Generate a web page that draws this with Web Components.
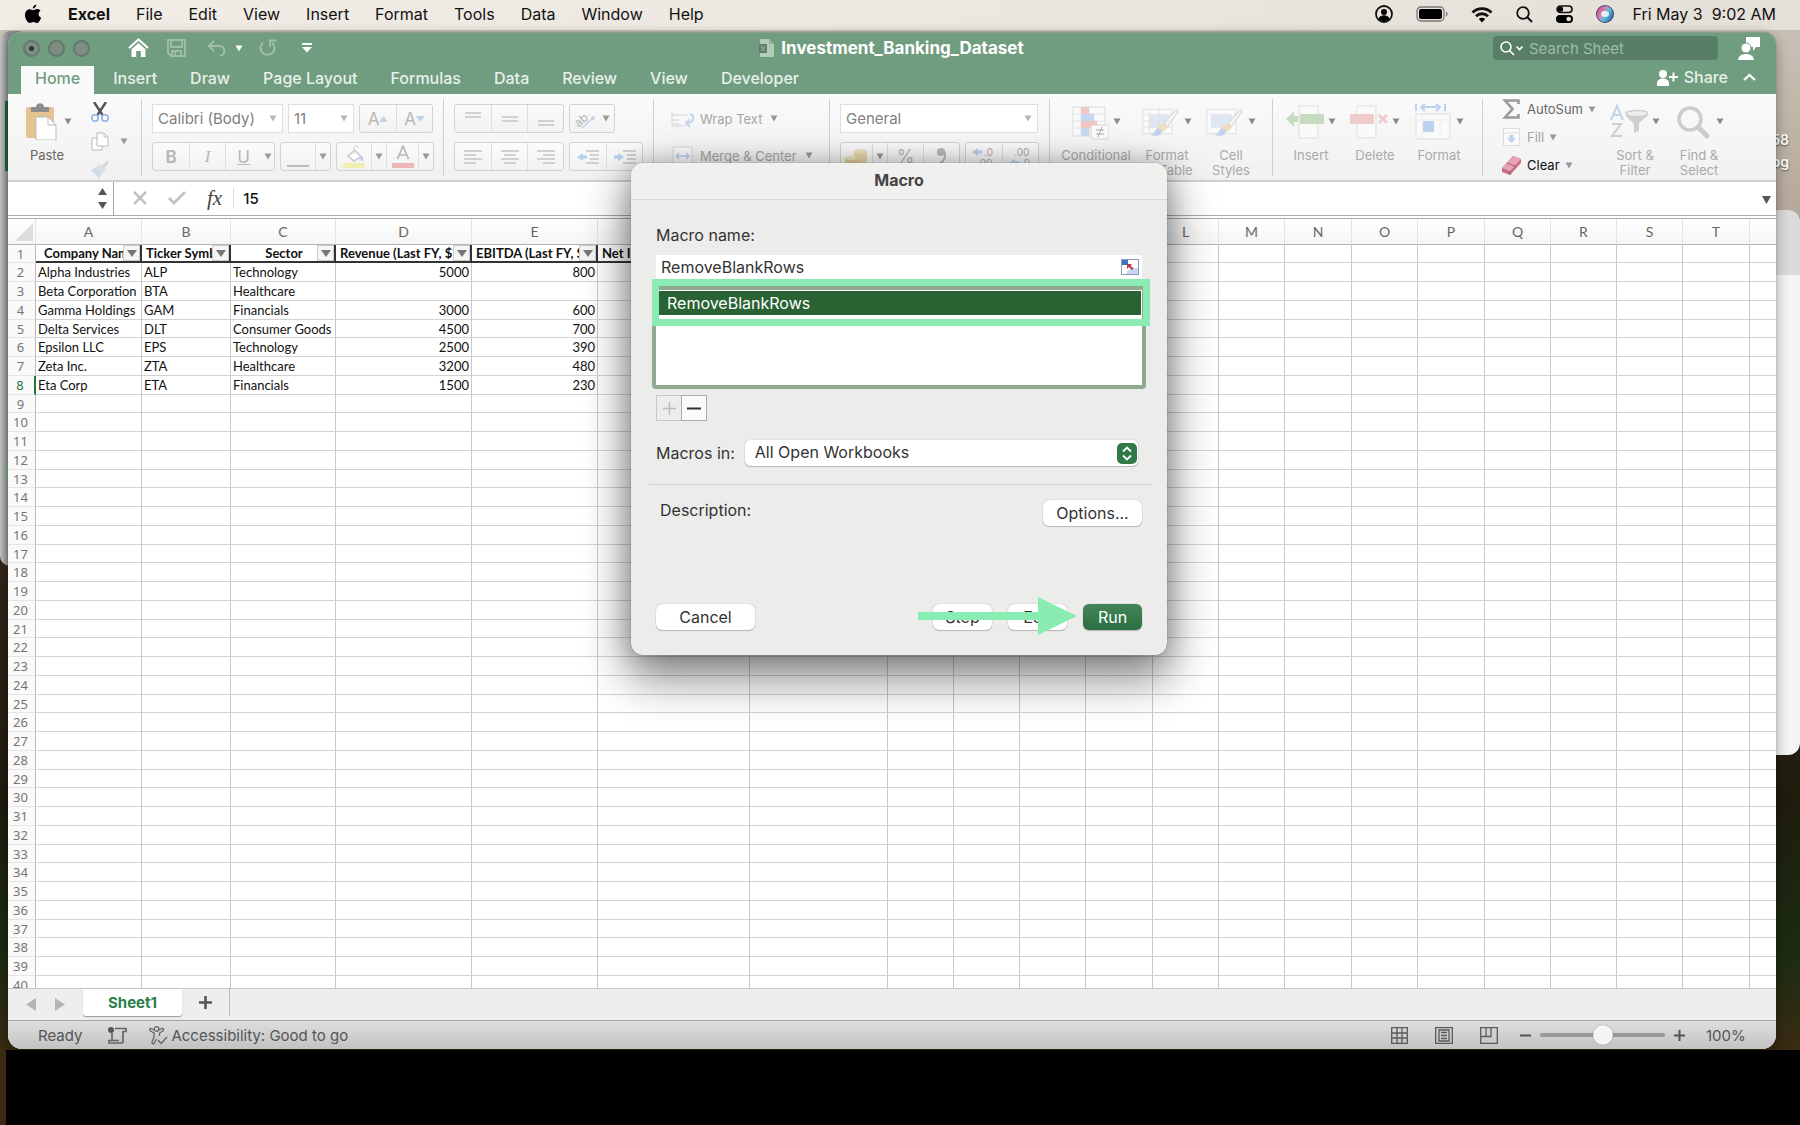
<!DOCTYPE html>
<html lang="en">
<head>
<meta charset="utf-8">
<title>Investment_Banking_Dataset</title>
<style>
  html, body {
    margin: 0;
    height: 100%;
    overflow: hidden;
    background: #000;
    font-family: Inter, "Liberation Sans", sans-serif;
  }
</style>
</head>
<body>
<mac-desktop>
  <menu-bar slot="menu"></menu-bar>
  <excel-window>
    <title-bar></title-bar>
    <ribbon-tabs></ribbon-tabs>
    <excel-ribbon></excel-ribbon>
    <formula-bar></formula-bar>
    <sheet-grid></sheet-grid>
    <sheet-tabs></sheet-tabs>
    <status-bar></status-bar>
  </excel-window>
  <macro-dialog slot="dialog"></macro-dialog>
</mac-desktop>

<script>
const caret = '<svg class="caret" width="8" height="7" viewBox="0 0 8 7"><path d="M0.5 0.5h7L4 6.5z" fill="currentColor"/></svg>';

const reset = `
  :host, * { box-sizing: border-box; }
  button, input, select {
    font: inherit;
    color: inherit;
    margin: 0;
    padding: 0;
    border: 0;
    background: none;
    border-radius: 0;
    outline: 0;
  }
  select { appearance: none; }
  svg { display: block; flex: none; }
`;

class MacDesktop extends HTMLElement {
  constructor() {
    super();
    this.attachShadow({mode: 'open'}).innerHTML = `
      <style>
        :host {
          display: flex;
          flex-direction: column;
          height: 100vh;
          position: relative;
          overflow: hidden;
          background: linear-gradient(#cdc4b9, #b5a99c 210px, #34251a 560px, #1f1c0e 800px, #1b2c12 950px, #3a2b12 1049px);
        }
        .behind { position: absolute; }
        .left {
          left: 0; top: 31px; width: 20px; height: 535px;
          background: linear-gradient(90deg, #c8c8c8, #8f8f8f 8px);
          border-radius: 10px 0 0 10px;
        }
        .mark { left: 5px; top: 101px; width: 4px; height: 70px; background: #1f6238; }
        .mark.low { top: 462px; height: 17px; background: #7fa98a; }
        .right {
          right: 0; top: 210px; width: 60px; height: 545px;
          border-radius: 0 12px 12px 0;
          background: linear-gradient(#dcdbda 65px, #f4f4f4 65px);
        }
        .floor { left: 6px; right: 0; top: 1050px; bottom: 0; background: #000; }
        .file {
          right: 11px; top: 129px;
          font-size: 14px;
          font-weight: 600;
          line-height: 22px;
          text-align: right;
          color: #fff;
          text-shadow: 0 1px 2px #0009;
        }
        .windows { flex: 1; min-height: 0; display: flex; margin: 2px 24px 76px 8px; position: relative; }
        ::slotted(excel-window) { flex: 1; min-width: 0; }
      </style>
      <div class="behind left"></div>
      <div class="behind mark"></div>
      <div class="behind mark low"></div>
      <div class="behind right"></div>
      <div class="behind floor"></div>
      <div class="behind file">58<br>pg</div>
      <slot name="menu"></slot>
      <div class="windows"><slot></slot></div>
      <slot name="dialog"></slot>
    `;
  }
}
customElements.define('mac-desktop', MacDesktop);

class MenuBar extends HTMLElement {
  constructor() {
    super();
    const menus = ['File', 'Edit', 'View', 'Insert', 'Format', 'Tools', 'Data', 'Window', 'Help'];
    this.attachShadow({mode: 'open'}).innerHTML = `
      <style>
        ${reset}
        :host {
          display: flex;
          align-items: center;
          justify-content: space-between;
          height: 30px;
          padding: 0 24px 2px;
          font-size: 16px;
          color: #111;
          background: linear-gradient(90deg, #f1ede6, #ece7e0 50%, #e4dfd7);
          position: relative;
        }
        nav, .extras { display: flex; align-items: center; }
        nav { gap: 26px; }
        nav button:first-of-type { font-weight: 700; }
        .extras { gap: 23px; }
        .clock { white-space: pre; margin-left: -5px; }
      </style>
      <nav>
        <svg width="18" height="20" viewBox="0 0 18 20"><path d="M12.3 0.5c.1 2-1.7 4-3.5 4C8.500 2.700 10.300 .8 12.300 .5zM16.500 6.800c-2.900 1.800-2.400 5.700.6 6.900-.8 2.300-2.400 5.300-4.200 5.300-1.400 0-1.900-.9-3.500-.9s-2.100.9-3.500.9C3.700 19 1 14.800 1 11.100 1 7.300 3.400 5.200 5.700 5.200c1.500 0 2.600 1 3.600 1 .9 0 2.300-1.100 4-1.100 1.300 0 2.500.6 3.200 1.700z"/></svg>
        <button>Excel</button>
        ${menus.map(m => `<button>${m}</button>`).join('')}
      </nav>
      <div class="extras">
        <svg width="18" height="18" viewBox="0 0 18 18"><circle cx="9" cy="9" r="8" fill="none" stroke="#111" stroke-width="1.800"/><circle cx="9" cy="7" r="3"/><path d="M3.500 14c1-5 10-5 11 0-3 3.300-8 3.300-11 0z"/></svg>
        <svg width="32" height="16" viewBox="0 0 32 16"><rect x="1" y="1" width="27" height="14" rx="4" fill="none" stroke="#777" stroke-width="1.300"/><rect x="3" y="3" width="23" height="10" rx="2"/><path d="M30 5.500v5c2-.8 2-4.200 0-5z" fill="#777"/></svg>
        <svg width="22" height="17" viewBox="0 0 22 17"><g fill="none" stroke="#111" stroke-width="2.800"><path d="M1.500 6.500c5.300-5.300 13.700-5.300 19 0"/><path d="M5 10.300c3.300-3.400 8.700-3.400 12 0"/></g><path d="M11 16.500l-3.200-3.400c1.800-1.700 4.600-1.700 6.400 0z"/></svg>
        <svg width="17" height="17" viewBox="0 0 17 17"><circle cx="7" cy="7" r="5.800" fill="none" stroke="#111" stroke-width="1.800"/><path d="M11.300 11.300l4.700 4.700" stroke="#111" stroke-width="2"/></svg>
        <svg width="17" height="18" viewBox="0 0 17 18"><rect x="1" y="1" width="15" height="6.500" rx="3.250" fill="none" stroke="#111" stroke-width="1.600"/><circle cx="4.500" cy="4.200" r="2.600"/><rect y="10" width="17" height="8" rx="4"/><circle cx="12.700" cy="14" r="2.300" fill="#e8e3dc"/></svg>
        <svg width="18" height="18" viewBox="0 0 18 18"><defs><linearGradient id="siri" x1="0" x2="1" y1="0.200" y2="0.800"><stop stop-color="#d9467c"/><stop offset=".4" stop-color="#c98fc4"/><stop offset=".6" stop-color="#48c3d0"/><stop offset="1" stop-color="#3d55b8"/></linearGradient></defs><circle cx="9" cy="9" r="9" fill="#45436b"/><circle cx="9" cy="9" r="8" fill="url(#siri)"/><ellipse cx="9" cy="9" rx="4" ry="3" fill="#fff" opacity=".8"/></svg>
        <span class="clock">Fri May 3  9:02 AM</span>
      </div>
    `;
  }
}
customElements.define('menu-bar', MenuBar);

class ExcelWindow extends HTMLElement {
  constructor() {
    super();
    this.attachShadow({mode: 'open'}).innerHTML = `
      <style>
        :host {
          display: flex;
          flex-direction: column;
          overflow: hidden;
          background: #fff;
          border-radius: 12px 12px 14px 14px;
          box-shadow: 0 0 1px #0008, 0 4px 14px #0005;
        }
        ::slotted(*) { flex: none; }
        ::slotted(sheet-grid) { flex: 1; min-height: 0; }
      </style>
      <slot></slot>
    `;
  }
}
customElements.define('excel-window', ExcelWindow);

class TitleBar extends HTMLElement {
  constructor() {
    super();
    this.attachShadow({mode: 'open'}).innerHTML = `
      <style>
        ${reset}
        :host {
          display: grid;
          grid-template-columns: 1fr auto 1fr;
          align-items: center;
          height: 34px;
          padding: 0 16px 3px 15px;
          background: #709d80;
          border-top: 1px solid #8a9c8e;
          color: #fff;
        }
        .tools, .title, .side, .lights { display: flex; align-items: center; }
        .lights { gap: 8px; margin-right: 38px; }
        .light { width: 17px; height: 17px; border-radius: 50%; background: #7d8f83; border: 2px solid #64786b; display: grid; place-items: center; }
        .light.edited::after { content: ""; width: 5px; height: 5px; border-radius: 50%; background: #333; }
        .home { margin-right: 18px; }
        .save { margin-right: 21px; }
        .undo { margin-right: 8px; }
        .redo { margin: 0 24px 0 15px; }
        .title { gap: 7px; font-weight: 700; font-size: 17px; }
        .side { justify-content: flex-end; gap: 20px; }
        .search {
          display: flex;
          align-items: center;
          gap: 6px;
          width: 225px;
          height: 24px;
          padding: 0 7px;
          border-radius: 4px;
          background: #597e67;
        }
        .search input { flex: 1; min-width: 0; font-size: 15px; }
        .search input::placeholder { color: #9dbda8; opacity: 1; }
      </style>
      <div class="tools">
        <div class="lights"><button class="light edited" aria-label="Close"></button><button class="light" aria-label="Minimize"></button><button class="light" aria-label="Zoom"></button></div>
        <button class="home" aria-label="Home"><svg width="21" height="20" viewBox="0 0 21 20"><path d="M1 10l9.500-8.500L20 10" fill="none" stroke="#fff" stroke-width="2.200"/><path d="M3.500 11.200l7-6.200 7 6.200V19h-4.700v-6H8.200v6H3.500z" fill="#fff"/></svg></button>
        <button class="save" aria-label="Save"><svg width="19" height="18" viewBox="0 0 19 18"><path d="M1 1h17v16H4l-3-3z M4 1v7h11V1 M5 17v-5h9v5 M8 12v5" fill="none" stroke="#9fbfaa" stroke-width="1.800"/></svg></button>
        <button class="undo" aria-label="Undo"><svg width="20" height="17" viewBox="0 0 20 17"><path d="M7 1L2 6l5 5M2 6h10c7 0 7 9.500 1 9.500" fill="none" stroke="#9fbfaa" stroke-width="2"/></svg></button>
        ${caret}
        <button class="redo" aria-label="Repeat"><svg width="20" height="18" viewBox="0 0 20 18"><path d="M5 3.500a7 7 0 1 0 9 0M12 8V1.500h7" fill="none" stroke="#9fbfaa" stroke-width="2"/></svg></button>
        <button aria-label="Customize toolbar"><svg width="10" height="10" viewBox="0 0 10 10"><path d="M0 0h10v2H0zM0 4h10L5 9.500z" fill="#fff"/></svg></button>
      </div>
      <div class="title">
        <svg width="15" height="18" viewBox="0 0 15 18"><path d="M1 0h9l5 5v13H1z" fill="#b3cbbb"/><path d="M10 0l5 5h-5z" fill="#8fb09b"/><rect y="5" width="8" height="9" fill="#5f7d69"/><path d="M2 7l4 5M6 7l-4 5" stroke="#9db9a7"/></svg>
        <span>Investment_Banking_Dataset</span>
      </div>
      <div class="side">
        <label class="search">
          <svg width="23" height="15" viewBox="0 0 23 15"><circle cx="6" cy="6" r="5" fill="none" stroke="#fff" stroke-width="1.600"/><path d="M9.700 9.700l4.300 4.300M16.500 5.500l3 3 3-3" fill="none" stroke="#fff" stroke-width="1.600"/></svg>
          <input type="text" placeholder="Search Sheet" aria-label="Search Sheet">
        </label>
        <button aria-label="Comments"><svg width="22" height="24" viewBox="0 0 22 24"><path d="M8 1h14v10h-4l-3 4v-4H8z" fill="#fff"/><circle cx="8" cy="12" r="5" fill="#fff" stroke="#709d80"/><path d="M0 24c0-8 16-8 16 0z" fill="#fff"/></svg></button>
      </div>
    `;
  }
}
customElements.define('title-bar', TitleBar);

class RibbonTabs extends HTMLElement {
  constructor() {
    super();
    const tabs = ['Home', 'Insert', 'Draw', 'Page Layout', 'Formulas', 'Data', 'Review', 'View', 'Developer'];
    this.attachShadow({mode: 'open'}).innerHTML = `
      <style>
        ${reset}
        :host {
          display: flex;
          justify-content: space-between;
          height: 28px;
          padding: 0 20px 0 13px;
          background: #709d80;
          color: #e8f0ea;
          font-size: 16px;
          font-weight: 500;
        }
        .tabs { display: flex; gap: 5px; }
        .tabs button { padding: 0 14px 4px; }
        .tabs button[aria-selected=true] { background: #fafafa; color: #709d80; }
        .share, .end { display: flex; align-items: center; }
        .share { gap: 6px; }
        .end { gap: 15px; padding-bottom: 6px; }
      </style>
      <div class="tabs" role="tablist">
        ${tabs.map((t, i) => `<button role="tab" aria-selected="${i === 0}">${t}</button>`).join('')}
      </div>
      <div class="end">
        <button class="share">
          <svg width="21" height="17" viewBox="0 0 21 17"><circle cx="6" cy="5" r="4" fill="#fff"/><path d="M0 17v-3c0-6 12-6 12 0v3zM15.500 3.500h2v3.500h3.500v2h-3.500v3.500h-2V9H12V7h3.500z" fill="#fff"/></svg>
          Share
        </button>
        <button aria-label="Collapse ribbon"><svg width="13" height="8" viewBox="0 0 13 8"><path d="M1 7l5.500-5L12 7" fill="none" stroke="#fff" stroke-width="2.200"/></svg></button>
      </div>
    `;
  }
}
customElements.define('ribbon-tabs', RibbonTabs);

// Large ribbon button: a 38px icon with its caret, and up to two label lines.
class RibbonButton extends HTMLElement {
  constructor() {
    super();
    this.attachShadow({mode: 'open'}).innerHTML = `
      <style>
        ${reset}
        :host { display: block; width: 64px; color: #aaa; }
        :host([wide]) { width: 78px; }
        button { width: 100%; font-size: 13px; line-height: 15px; }
        .icon { display: flex; align-items: center; justify-content: center; gap: 4px; height: 38px; margin-bottom: 8px; }
        .caret { color: #8a8a8a; }
      </style>
      <button>
        <div class="icon"><slot name="icon"></slot>${caret}</div>
        <slot></slot>
      </button>
    `;
  }
}
customElements.define('ribbon-button', RibbonButton);

class ExcelRibbon extends HTMLElement {
  constructor() {
    super();
    const lines = (...rows) => `<svg width="20" height="16" viewBox="0 0 20 16">${rows.map(([x, y, w]) => `<path d="M${x} ${y}h${w}" stroke="#c4c4c4" stroke-width="1.500"/>`).join('')}</svg>`;
    const brush = '<path d="M38 6L24 22l4 3L40 9z" fill="#f3f3f3" stroke="#ccc"/><path d="M15 30c2-6 6-9 10-8 4 2 3 6-1 9z" fill="#eeddc0"/><path d="M9 34c5 0 5-6 9-7 4 1 5 4 3 6-3 3-8 3-12 1z" fill="#bfd3ef"/>';
    this.attachShadow({mode: 'open'}).innerHTML = `
      <style>
        ${reset}
        :host {
          display: flex;
          height: 88px;
          overflow: hidden;
          padding-top: 5px;
          background: linear-gradient(#fafafa, #f1f1f1);
          border-bottom: 2px solid #cfcfcf;
          font-size: 13px;
          color: #a5a5a5;
        }
        .group { display: flex; height: 77px; border-right: 1px solid #cfcfcf; flex: none; }
        .group:last-child { border: 0; }
        .big { padding-top: 3px; }
        .rows { padding: 5px 0 0 10px; flex-direction: column; gap: 9px; }
        .row { display: flex; height: 29px; gap: 5px; }
        .set { display: flex; border: 1px solid #d2d2d2; border-radius: 3px; background: linear-gradient(#fbfbfb, #f2f2f2); color: #b8b8b8; }
        .set button { width: 36px; display: flex; align-items: center; justify-content: center; border-left: 1px solid #dedede; font-size: 17px; }
        .set button:first-child { border: 0; }
        .set .drop { width: 15px; }
        .set .flat { border: 0; width: 13px; }
        .caret { color: #999; }
        .combo { display: flex; align-items: center; height: 29px; background: #fff; border: 1px solid #dedede; padding: 0 5px; }
        .combo select { flex: 1; min-width: 0; font-size: 15px; color: #808080; }
        .combo .caret { color: #b5b5b5; }
        .c1 { width: 131px; } .c2 { width: 66px; } .c3 { width: 198px; }
        .g1 { width: 134px; padding-left: 7px; }
        .g2 { width: 302px; } .g3 { width: 210px; }
        .g4 { width: 176px; padding: 7px 0 0 17px; flex-direction: column; gap: 12px; }
        .g5 { width: 220px; } .g6 { width: 223px; padding-left: 7px; } .g7 { width: 210px; padding-left: 6px; }
        .g8 { padding-left: 19px; }
        .label { display: flex; align-items: center; gap: 5px; height: 25px; white-space: nowrap; }
        .g4 .caret { margin-left: 3px; }
        .clip { padding: 0 0 0 12px; display: flex; flex-direction: column; gap: 10px; }
        .clip .pair { display: flex; align-items: center; gap: 11px; }
        .edit { display: flex; flex-direction: column; gap: 8px; width: 101px; }
        .edit button { display: flex; align-items: center; height: 20px; gap: 5px; }
        .edit svg:first-child { width: 20px; }
        .dark { color: #666; } .black { color: #111; }
      </style>

      <div class="group big g1">
        <ribbon-button style="color:#666">
          <svg slot="icon" width="38" height="38" viewBox="0 0 38 38"><rect x="4" y="5" width="28" height="31" rx="2" fill="#e3c48e"/><path d="M9 10V5h5c0-5 8-5 8 0h5v5z" fill="#8d8d8d"/><path d="M14 15h12l8 8v15H14z" fill="#fff" stroke="#bbb"/><path d="M26 15v8h8" fill="none" stroke="#bbb"/></svg>
          Paste
        </ribbon-button>
        <div class="clip">
          <button aria-label="Cut"><svg width="18" height="20" viewBox="0 0 18 20"><path d="M3 0l8.500 13M15 0L6.500 13" stroke="#555" stroke-width="2.400"/><circle cx="4" cy="16" r="3.200" fill="none" stroke="#8fb1e8" stroke-width="1.600"/><circle cx="14" cy="16" r="3.200" fill="none" stroke="#8fb1e8" stroke-width="1.600"/></svg></button>
          <div class="pair"><button aria-label="Copy"><svg width="18" height="19" viewBox="0 0 18 19"><path d="M1 6h7l3 3v9H1z" fill="#fff" stroke="#bbb"/><path d="M6 1h7l4 4v9H6z" fill="#fff" stroke="#bbb"/><path d="M13 1v4h4" fill="none" stroke="#bbb"/></svg></button>${caret}</div>
          <button aria-label="Format painter"><svg width="18" height="17" viewBox="0 0 18 17"><path d="M11 5l5-5 2 2-5 5z" fill="#d5d5d5"/><path d="M5 6l7 6 3-4-6-5z" fill="#dedede"/><path d="M0 9l5-3 7 6-4 5z" fill="#cfdbea"/></svg></button>
        </div>
      </div>

      <div class="group rows g2">
        <div class="row">
          <div class="combo c1"><select aria-label="Font"><option>Calibri (Body)</option></select>${caret}</div>
          <div class="combo c2"><select aria-label="Font size"><option>11</option></select>${caret}</div>
          <div class="set">
            <button aria-label="Increase font size">A<svg width="9" height="6" viewBox="0 0 9 6"><path d="M0 6l4.500-6L9 6z" fill="#c2d3ea"/></svg></button>
            <button aria-label="Decrease font size">A<svg width="9" height="6" viewBox="0 0 9 6"><path d="M0 0h9L4.500 6z" fill="#c2d3ea"/></svg></button>
          </div>
        </div>
        <div class="row">
          <div class="set"><button><b>B</b></button><button><i style="font-family:'Liberation Serif',serif">I</i></button><button><u>U</u></button><button class="flat" aria-label="Underline style">${caret}</button></div>
          <div class="set"><button aria-label="Borders" style="width:34px"><svg width="22" height="20" viewBox="0 0 22 20"><path d="M0 19h22" stroke="#aaa" stroke-width="1.500"/></svg></button><button class="drop" aria-label="Border style">${caret}</button></div>
          <div class="set">
            <button aria-label="Fill colour" style="width:34px"><svg width="22" height="24" viewBox="0 0 22 24"><path d="M5 11l7-6 6 7-7 4z" fill="#fff" stroke="#ccc" stroke-width="1.500"/><path d="M11 9V3c0-3 4-3 4 0" fill="none" stroke="#ccc"/><path d="M18 10c3 3 3 6 1 6s-2-3-1-6z" fill="#b5cdf0"/><path d="M0 18h22v5H0z" fill="#efefb0"/></svg></button><button class="drop" aria-label="Fill colours">${caret}</button>
            <button aria-label="Font colour" style="width:32px"><svg width="22" height="24" viewBox="0 0 22 24"><path d="M5.500 14L11 1l5.500 13M7.500 10h7" fill="none" stroke="#b5b5b5" stroke-width="1.700"/><path d="M0 18h22v5H0z" fill="#efb8b8"/></svg></button><button class="drop" aria-label="Font colours">${caret}</button>
          </div>
        </div>
      </div>

      <div class="group rows g3">
        <div class="row">
          <div class="set"><button aria-label="Top align">${lines([2, 2, 16], [2, 6, 16])}</button><button aria-label="Middle align">${lines([2, 6, 16], [2, 10, 16])}</button><button aria-label="Bottom align">${lines([2, 10, 16], [2, 14, 16])}</button></div>
          <div class="set"><button aria-label="Orientation" style="width:44px;gap:5px"><svg width="23" height="22" viewBox="0 0 23 22"><text x="2" y="17" font-size="12" fill="#b5b5b5" transform="rotate(-40 7 15)">ab</text><path d="M8 20L19 10" stroke="#c2d3ea" stroke-width="1.500"/><circle cx="19" cy="10" r="2" fill="#c2d3ea"/></svg>${caret}</button></div>
        </div>
        <div class="row">
          <div class="set"><button aria-label="Align left">${lines([1, 2, 18], [1, 6, 12], [1, 10, 18], [1, 14, 12])}</button><button aria-label="Centre">${lines([1, 2, 18], [4, 6, 12], [1, 10, 18], [4, 14, 12])}</button><button aria-label="Align right">${lines([1, 2, 18], [7, 6, 12], [1, 10, 18], [7, 14, 12])}</button></div>
          <div class="set">
            <button aria-label="Decrease indent"><svg width="22" height="16" viewBox="0 0 22 16"><path d="M0 8l6-4v2.500h4v3H6V12z" fill="#b7cff2"/><path d="M9 2h13M13 6h9M13 10h9M9 14h13" stroke="#c4c4c4" stroke-width="1.500"/></svg></button>
            <button aria-label="Increase indent"><svg width="22" height="16" viewBox="0 0 22 16"><path d="M10 8L4 4v2.500H0v3h4V12z" fill="#b7cff2"/><path d="M9 2h13M13 6h9M13 10h9M9 14h13" stroke="#c4c4c4" stroke-width="1.500"/></svg></button>
          </div>
        </div>
      </div>

      <div class="group g4">
        <button class="label"><svg width="24" height="18" viewBox="0 0 24 18"><path d="M1 1v15h14M1 5h15" fill="none" stroke="#d2d2d2"/><path d="M2 10h6M2 14h6" stroke="#ccc"/><path d="M19 4c6 2 3 9-2 9M19 9l-4 4 4 4" fill="none" stroke="#c2d3ea" stroke-width="2"/></svg>Wrap Text ${caret}</button>
        <button class="label"><svg width="24" height="20" viewBox="0 0 24 20"><rect x="2" y="1" width="19" height="18" fill="#fbfbfb" stroke="#d8d8d8"/><path d="M5 10h13M8 7l-3 3 3 3M15 7l3 3-3 3" fill="none" stroke="#b7cff2" stroke-width="1.500"/></svg>Merge &amp; Center ${caret}</button>
      </div>

      <div class="group rows g5">
        <div class="row"><div class="combo c3"><select aria-label="Number format"><option>General</option></select>${caret}</div></div>
        <div class="row">
          <div class="set"><button aria-label="Currency" style="width:31px"><svg width="23" height="18" viewBox="0 0 23 18"><path d="M9 3h13v12H9z" fill="#e8d5a8"/><ellipse cx="15.500" cy="3" rx="6.500" ry="2" fill="#f0e3c2"/><path d="M0 10h13v7H0z" fill="#e3cd9a"/><ellipse cx="6.500" cy="10" rx="6.500" ry="2" fill="#f0e3c2"/></svg></button><button class="drop" aria-label="Currency list">${caret}</button><button style="font-size:18px">%</button><button aria-label="Comma style"><svg width="9" height="17" viewBox="0 0 9 17"><circle cx="4" cy="4" r="4" fill="#b9b9b9"/><path d="M5 1c6 4 3 12-3 15" fill="none" stroke="#b9b9b9" stroke-width="2"/></svg></button></div>
          <div class="set">
            <button aria-label="Increase decimal"><svg width="24" height="24" viewBox="0 0 24 24"><path d="M0 7l6-4v2.500h4v3H6V11z" fill="#b7cff2"/><text x="12" y="11" font-size="10" fill="#aaa">.0</text><text x="5" y="22" font-size="10" fill="#aaa">.00</text></svg></button>
            <button aria-label="Decrease decimal"><svg width="24" height="24" viewBox="0 0 24 24"><path d="M0 18l6-4v2.500h4v3H6V22z" fill="#b7cff2"/><text x="5" y="11" font-size="10" fill="#aaa">.00</text><text x="12" y="22" font-size="10" fill="#aaa">.0</text></svg></button>
          </div>
        </div>
      </div>

      <div class="group big g6">
        <ribbon-button wide>
          <svg slot="icon" width="38" height="38" viewBox="0 0 38 38"><rect x="2" y="5" width="32" height="29" fill="#fafafa" stroke="#ddd"/><path d="M10 5v29M18 5v29M2 12h32M2 19h32M2 26h32" stroke="#e2e2e2"/><path d="M10 5h8v7h-8zM10 19h16v7H10z" fill="#f2c6c6"/><path d="M10 12h13v7H10zM10 26h8v8h-8z" fill="#c6d8f0"/><rect x="20" y="23" width="18" height="14" rx="2" fill="#fafafa" stroke="#d5d5d5"/><path d="M25 28h8M25 32h8M31 25l-4 10" stroke="#aaa"/></svg>
          Conditional<br>Formatting
        </ribbon-button>
        <ribbon-button>
          <svg slot="icon" width="38" height="38" viewBox="0 0 42 38"><rect x="1" y="6" width="32" height="27" fill="#fafafa" stroke="#ddd"/><path d="M8 12h22v14H8z" fill="#dde7f5"/><path d="M8 6v27M19 6v27M1 12h32M1 19h32M1 26h32" stroke="#e2e2e2"/>${brush}</svg>
          Format<br>as Table
        </ribbon-button>
        <ribbon-button>
          <svg slot="icon" width="38" height="38" viewBox="0 0 42 38"><rect x="1" y="6" width="32" height="27" fill="#fafafa" stroke="#ddd"/><path d="M6 12h22v14H6z" fill="#dde7f5" stroke="#e2e2e2"/>${brush}</svg>
          Cell<br>Styles
        </ribbon-button>
      </div>

      <div class="group big g7">
        <ribbon-button>
          <svg slot="icon" width="38" height="38" viewBox="0 0 38 38"><rect x="13" y="4" width="19" height="32" fill="#fafafa" stroke="#ddd"/><path d="M14 12h24v10H14z" fill="#c6dcc0"/><path d="M0 17l8-8v5h4v6H8v5z" fill="#c6dcc0"/></svg>
          Insert
        </ribbon-button>
        <ribbon-button>
          <svg slot="icon" width="38" height="38" viewBox="0 0 38 38"><rect x="7" y="4" width="19" height="32" rx="1" fill="#fafafa" stroke="#ddd"/><path d="M0 12h24v10H0z" fill="#f0cccc"/><path d="M29 13l8 8M37 13l-8 8" stroke="#f0cccc" stroke-width="3"/></svg>
          Delete
        </ribbon-button>
        <ribbon-button>
          <svg slot="icon" width="38" height="38" viewBox="0 0 38 38"><path d="M2 2v7M31 2v7M8 5h17M11 2L7 5l4 4M22 2l4 3-4 4" fill="none" stroke="#bcd2ee" stroke-width="2"/><rect x="2" y="12" width="34" height="25" rx="1" fill="#fafafa" stroke="#ddd"/><path d="M2 18h34M8 12v25M26 12v25" stroke="#eee"/><path d="M9 19h11v11H9z" fill="#bcd2ee"/></svg>
          Format
        </ribbon-button>
      </div>

      <div class="group g8">
        <div class="edit">
          <button class="dark"><svg width="20" height="20" viewBox="0 0 20 20"><path d="M16.500 5V1.500H3L10.500 10 3 18.500h13.500V15" fill="none" stroke="#999" stroke-width="2.600"/></svg>AutoSum ${caret}</button>
          <button><svg width="20" height="18" viewBox="0 0 20 18"><g transform="translate(1)"><rect x=".5" y=".5" width="16" height="17" fill="#fafafa" stroke="#ddd"/><path d="M.5 5h16" stroke="#ddd"/><path d="M6.500 7h4v3.500H13L8.500 15 4 10.500h2.500z" fill="#b9d2f0"/></g></svg>Fill ${caret}</button>
          <button class="black"><svg width="20" height="20" viewBox="0 0 20 20"><path d="M0 13L11 1l8 3v4L8 20l-8-3z" fill="#c96d86"/><path d="M0 13L11 1l8 3L8 16z" fill="#e7a2b4"/><path d="M8 16v4M5 8l8 3" stroke="#b0506c"/></svg>Clear ${caret}</button>
        </div>
        <div class="group big">
          <ribbon-button>
            <svg slot="icon" width="38" height="38" viewBox="0 0 38 38"><path d="M1 18L7 4l6 14M3 13h8" fill="none" stroke="#c2d3ea" stroke-width="2"/><path d="M2 22h9L2 34h10" fill="none" stroke="#ccc" stroke-width="2"/><path d="M16 12c0 4 7 8 8 10v9l5-2v-7c1-3 9-7 9-10z" fill="#cfcfcf"/><ellipse cx="27" cy="11.500" rx="11" ry="3" fill="#eee" stroke="#cfcfcf" stroke-width="1.500"/></svg>
            Sort &amp;<br>Filter
          </ribbon-button>
          <ribbon-button>
            <svg slot="icon" width="38" height="38" viewBox="0 0 38 38"><circle cx="16" cy="17" r="11" fill="none" stroke="#ccc" stroke-width="3.500"/><path d="M24 25l9 9" stroke="#ccc" stroke-width="5" stroke-linecap="round"/></svg>
            Find &amp;<br>Select
          </ribbon-button>
        </div>
      </div>
    `;
  }
}
customElements.define('excel-ribbon', ExcelRibbon);

class FormulaBar extends HTMLElement {
  constructor() {
    super();
    this.attachShadow({mode: 'open'}).innerHTML = `
      <style>
        ${reset}
        :host {
          display: flex;
          align-items: center;
          height: 37px;
          padding-right: 5px;
          background: #fff;
          border-bottom: 1px solid #aaa;
          box-shadow: inset 0 -2px #fff, inset 0 -3px #aaa;
        }
        .name { display: flex; align-items: center; align-self: flex-start; width: 106px; height: 33px; padding-right: 6px; border-right: 1px solid #aaa; }
        .name input { flex: 1; min-width: 0; }
        .actions { display: flex; align-items: center; gap: 21px; padding: 0 11px 4px 19px; }
        .value { flex: 1; min-width: 0; height: 20px; margin-bottom: 4px; padding-left: 9px; border-left: 1px solid #ddd; font-size: 15px; font-weight: 500; color: #111; }
        .fx { font: italic 21px/21px "Liberation Serif", serif; color: #444; }
      </style>
      <div class="name">
        <input type="text" aria-label="Name box">
        <svg width="9" height="22" viewBox="0 0 9 22"><path d="M0 7l4.500-7L9 7zM0 14h9l-4.500 7z" fill="#555"/></svg>
      </div>
      <div class="actions">
        <button aria-label="Cancel"><svg width="14" height="14" viewBox="0 0 14 14"><path d="M1 1l12 12M13 1L1 13" stroke="#c2c2c2" stroke-width="2.500"/></svg></button>
        <button aria-label="Enter"><svg width="18" height="14" viewBox="0 0 18 14"><path d="M1 7l5 5L17 1" fill="none" stroke="#c2c2c2" stroke-width="2.800"/></svg></button>
        <button class="fx">fx</button>
      </div>
      <input class="value" type="text" value="15" aria-label="Formula">
      <button aria-label="Expand"><svg width="9" height="8" viewBox="0 0 9 8"><path d="M0 0h9L4.500 8z" fill="#555"/></svg></button>
    `;
  }
}
customElements.define('formula-bar', FormulaBar);

class SheetGrid extends HTMLElement {
  constructor() {
    super();
    const widths = [28, 106, 89, 105, 136, 126, 152, 138, 66, 66, 66, 67, 66, 66, 67, 66, 67, 66, 66, 66, 67];
    const letters = 'ABCDEFGHIJKLMNOPQRST'.split('');
    const heads = ['Company Name', 'Ticker Symbol', 'Sector', 'Revenue (Last FY, $M)', 'EBITDA (Last FY, $M)', 'Net Income'];
    const data = [
      ['Alpha Industries', 'ALP', 'Technology', 5000, 800],
      ['Beta Corporation', 'BTA', 'Healthcare', '', ''],
      ['Gamma Holdings', 'GAM', 'Financials', 3000, 600],
      ['Delta Services', 'DLT', 'Consumer Goods', 4500, 700],
      ['Epsilon LLC', 'EPS', 'Technology', 2500, 390],
      ['Zeta Inc.', 'ZTA', 'Healthcare', 3200, 480],
      ['Eta Corp', 'ETA', 'Financials', 1500, 230]
    ];
    const filter = `<button aria-label="Filter"><svg width="10" height="7" viewBox="0 0 10 7"><path d="M0 0h10L5 7z" fill="#777"/></svg></button>`;

    const row = n => {
      let cells = '';
      for (let c = 0; c < letters.length + 1; c++) {
        if (n === 1 && c < heads.length) {
          cells += `<td class="head"><div><span>${heads[c]}</span>${filter}</div></td>`;
        } else {
          const v = n > 1 && data[n - 2] ? data[n - 2][c] : undefined;
          cells += `<td${typeof v === 'number' ? ' class="num"' : ''}>${v === undefined ? '' : v}</td>`;
        }
      }
      return `<tr${n === 8 ? ' class="current"' : ''}><th scope="row">${n}</th>${cells}</tr>`;
    };

    this.attachShadow({mode: 'open'}).innerHTML = `
      <style>
        ${reset}
        :host {
          display: block;
          overflow: hidden;
          font: 13px/16px Lato, "Liberation Sans", sans-serif;
          color: #111;
          border-bottom: 1px solid #c4c4c4;
        }
        table { width: 100%; table-layout: fixed; border-collapse: separate; border-spacing: 0; }
        th, td { padding: 0 2px; border-right: 1px solid #c8c8c8; border-bottom: 1px solid #d2d2d2; white-space: nowrap; overflow: hidden; text-align: left; }
        thead th { height: 26px; text-align: center; font-weight: 400; font-size: 14px; color: #666; background: linear-gradient(#fff, #f5f5f5); border-right-color: #e4e4e4; border-bottom-color: #b5b5b5; }
        thead th:last-child, td:last-child { border-right: 0; }
        thead svg { margin-left: 5px; }
        tbody tr { height: 19px; }
        tbody tr:nth-child(4n+1) { height: 18px; }
        tbody th { font: 13px/16px "Noto Sans", sans-serif; color: #757575; text-align: center; padding: 0 2px 0 0; background: #fafafa; border-right-color: #bbb; border-bottom-color: #e6e6e6; }
        .current th { color: #217346; border-right: 2px solid #217346; }
        .num { text-align: right; }
        td.head { padding: 0; font-weight: 700; border-right: 2px solid #333; border-bottom: 2px solid #333; }
        .head div { display: flex; height: 16px; }
        .head span { flex: 1; min-width: 0; overflow: hidden; padding-left: 4px; }
        .head:nth-child(2) span { padding-left: 8px; }
        .head:nth-child(4) span { text-align: center; padding-left: 20px; }
        .head button { width: 17px; flex: none; display: grid; place-items: center; background: #f5f5f5; border: 1px solid #ccc; }
      </style>
      <table>
        <colgroup>${widths.map(w => `<col style="width:${w}px">`).join('')}<col></colgroup>
        <thead><tr><th><svg width="18" height="18" viewBox="0 0 18 18"><path d="M18 0v18H0z" fill="#ddd"/></svg></th>${letters.map(l => `<th scope="col">${l}</th>`).join('')}<th></th></tr></thead>
        <tbody>${Array.from({length: 40}, (_, i) => row(i + 1)).join('')}</tbody>
      </table>
    `;
  }
}
customElements.define('sheet-grid', SheetGrid);

class SheetTabs extends HTMLElement {
  constructor() {
    super();
    this.attachShadow({mode: 'open'}).innerHTML = `
      <style>
        ${reset}
        :host { display: flex; height: 31px; padding-left: 18px; background: #eee; }
        .nav { display: flex; gap: 19px; align-items: center; padding-right: 18px; }
        .tab { width: 99px; height: 27px; background: #fff; border-radius: 0 0 3px 3px; box-shadow: 0 1px 1px #999; color: #2b8049; font-size: 15px; font-weight: 700; }
        .add { width: 48px; height: 27px; display: grid; place-items: center; border-right: 1px solid #bbb; }
      </style>
      <div class="nav">
        <button aria-label="Previous sheet"><svg width="10" height="13" viewBox="0 0 10 13"><path d="M10 0v13L0 6.500z" fill="#b5b5b5"/></svg></button>
        <button aria-label="Next sheet"><svg width="10" height="13" viewBox="0 0 10 13"><path d="M0 0v13l10-6.500z" fill="#b5b5b5"/></svg></button>
      </div>
      <button class="tab">Sheet1</button>
      <button class="add" aria-label="Add sheet"><svg width="13" height="13" viewBox="0 0 13 13"><path d="M6.500 0v13M0 6.500h13" stroke="#555" stroke-width="2.600"/></svg></button>
    `;
  }
}
customElements.define('sheet-tabs', SheetTabs);

class StatusBar extends HTMLElement {
  constructor() {
    super();
    this.attachShadow({mode: 'open'}).innerHTML = `
      <style>
        ${reset}
        :host {
          display: flex;
          align-items: center;
          justify-content: space-between;
          height: 29px;
          padding: 0 28px 0 30px;
          background: linear-gradient(#dedede, #c2c2c2);
          border-top: 1px solid #a5a5a5;
          font-size: 15px;
          color: #555;
        }
        .left, .views, .zoom { display: flex; align-items: center; }
        .left { gap: 26px; }
        .check { display: flex; align-items: center; gap: 3px; margin-left: -4px; }
        .views { gap: 27px; }
        .zoom { gap: 9px; margin-left: 22px; }
        .right { display: flex; align-items: center; }
        .percent { margin-left: 12px; width: 42px; }
        input[type=range] { appearance: none; width: 125px; height: 20px; }
        input::-webkit-slider-runnable-track { height: 4px; border-radius: 2px; background: #999; }
        input::-webkit-slider-thumb { appearance: none; width: 20px; height: 20px; margin-top: -8px; border-radius: 50%; background: #f5f5f5; box-shadow: 0 0 1px #0008; }
      </style>
      <div class="left">
        <span>Ready</span>
        <button aria-label="Record macro"><svg width="19" height="17" viewBox="0 0 19 17"><circle cx="3" cy="3" r="3" fill="#555"/><path d="M7 1.500h11v3h-3V14c0 1-1 2-2 2H1v-2.500h10M4 6v8" fill="none" stroke="#666" stroke-width="1.700"/></svg></button>
        <button class="check">
          <svg width="19" height="19" viewBox="0 0 19 19"><g fill="none" stroke="#666" stroke-width="1.300"><circle cx="7.500" cy="3" r="2.300"/><path d="M5 4L2 2.500C.5 2 .3 4.300 1.500 5L5 7v4l-2 5c-.3 2 1.600 2.500 2.300 1L7.500 13M10 4l3-1.500c2-.5 2 1.800.7 2.500L10.500 7v3"/><path d="M9 14l3 3.500L18 11"/></g></svg>
          Accessibility: Good to go
        </button>
      </div>
      <div class="right">
        <div class="views">
          <button aria-label="Normal"><svg width="17" height="17" viewBox="0 0 17 17"><path d="M.7.7h15.600v15.600H.7zM.7 6h15.600M.7 11h15.600M6 .7v15.600M11 .7v15.600" fill="none" stroke="#5a5a5a" stroke-width="1.300"/></svg></button>
          <button aria-label="Page layout"><svg width="18" height="17" viewBox="0 0 18 17"><path d="M.7.7h16.600v15.600H.7zM4 3h10v11H4zM6 5.500h6M6 8.500h6M6 11.500h6" fill="none" stroke="#5a5a5a" stroke-width="1.300"/></svg></button>
          <button aria-label="Page break"><svg width="18" height="17" viewBox="0 0 18 17"><path d="M.7.7h16.600v15.600H.7zM.7 9.500H11V.7M6 .7v8.800" fill="none" stroke="#5a5a5a" stroke-width="1.300"/></svg></button>
        </div>
        <div class="zoom">
          <button aria-label="Zoom out"><svg width="11" height="11" viewBox="0 0 11 11"><path d="M0 5.500h11" stroke="#555" stroke-width="2"/></svg></button>
          <input type="range" min="0" max="200" value="100" aria-label="Zoom">
          <button aria-label="Zoom in"><svg width="11" height="11" viewBox="0 0 11 11"><path d="M0 5.500h11M5.500 0v11" stroke="#555" stroke-width="2"/></svg></button>
          <span class="percent">100%</span>
        </div>
      </div>
    `;
  }
}
customElements.define('status-bar', StatusBar);

class MacroDialog extends HTMLElement {
  constructor() {
    super();
    this.attachShadow({mode: 'open'}).innerHTML = `
      <style>
        ${reset}
        :host {
          position: absolute;
          top: 163px;
          left: calc(50% - 269px);
          width: 536px;
          height: 492px;
          border-radius: 12px;
          background: #ececeb;
          box-shadow: 0 0 1px #0009, 0 0 24px #0003, 0 20px 45px 4px #0007;
          font-size: 16px;
          color: #333;
          display: flex;
          flex-direction: column;
        }
        h1 { margin: 0; height: 37px; line-height: 35px; text-align: center; font-size: 16px; font-weight: 700; color: #444; background: #f0f0ef; border-bottom: 1px solid #d8d8d8; border-radius: 12px 12px 0 0; }
        .body { flex: 1; display: flex; flex-direction: column; padding: 25px 25px 25px; }
        .body > label { line-height: 20px; }
        .name { display: flex; align-items: center; height: 24px; margin-top: 10px; padding: 0 3px 0 5px; background: #fff; }
        .name input { flex: 1; min-width: 0; }
        ul { list-style: none; margin: 7px -4px 0; padding: 1px 1px; height: 103px; border: 4px solid #8eaa90; border-radius: 4px; background: #fff; }
        li { height: 24px; line-height: 24px; padding-left: 10px; background: #296334; color: #fff; }
        .steps { display: flex; margin-top: 6px; }
        .steps button { width: 26px; height: 26px; display: grid; place-items: center; border: 1px solid #c8c8c8; }
        .steps button + button { background: #fafafa; border-color: #aaa; margin-left: -1px; }
        .scope { display: flex; align-items: center; gap: 10px; margin-top: 19px; }
        .pop { flex: 1; display: flex; align-items: center; height: 26px; margin-right: 4px; padding-right: 2px; background: #fff; border-radius: 5px; box-shadow: 0 0 1px #0006, 0 1px 1px #0003; position: relative; }
        .pop select { flex: 1; height: 26px; padding: 0 0 2px 10px; }
        .pop svg { position: absolute; right: 1px; pointer-events: none; }
        hr { width: calc(100% + 17px); margin: 18px 0 0 -7px; border: 0; border-top: 1px solid #d2d2d2; }
        .describe { display: flex; justify-content: space-between; margin: 15px 0 0 4px; }
        .push { height: 26px; width: 59px; padding-bottom: 1px; border-radius: 6px; background: #fff; box-shadow: 0 0 1px #0006, 0 1px 1px #0003; }
        .wide { width: 99px; }
        .run { background: linear-gradient(#448459, #2c6f42); color: #fff; }
        .actions { display: flex; gap: 16px; margin-top: auto; }
        .actions .wide { margin-right: auto; }
        .mark { position: absolute; left: 21px; top: 116px; width: 498px; height: 47px; border: 7px solid #8aebb3; }
        .arrow { position: absolute; left: 287px; top: 434px; }
      </style>
      <h1>Macro</h1>
      <div class="body">
        <label for="name">Macro name:</label>
        <div class="name">
          <input id="name" type="text" value="RemoveBlankRows">
          <button aria-label="Pick range"><svg width="18" height="16" viewBox="0 0 18 16"><rect x=".5" y=".5" width="17" height="15" fill="#fff" stroke="#889ab5"/><path d="M1 1h6v5H1z" fill="#3a75c4"/><path d="M11 9h6v6H6v-3z" fill="#c6d9f2"/><path d="M6 5h5l-1.500 1.500 3 3-1.500 1.500-3-3L6 10z" fill="#b93640"/></svg></button>
        </div>
        <ul role="listbox" aria-label="Macros"><li role="option" aria-selected="true">RemoveBlankRows</li></ul>
        <div class="steps">
          <button aria-label="Add"><svg width="13" height="13" viewBox="0 0 13 13"><path d="M6.500 0v13M0 6.500h13" stroke="#bbb" stroke-width="1.500"/></svg></button>
          <button aria-label="Remove"><svg width="14" height="13" viewBox="0 0 14 13"><path d="M0 6.500h14" stroke="#333" stroke-width="2"/></svg></button>
        </div>
        <div class="scope">
          <label for="scope">Macros in:</label>
          <div class="pop">
            <select id="scope"><option>All Open Workbooks</option></select>
            <svg width="20" height="21" viewBox="0 0 20 21"><rect width="20" height="21" rx="5" fill="#317a48"/><path d="M6 8.500l4-4 4 4M6 12.500l4 4 4-4" fill="none" stroke="#fff" stroke-width="1.800"/></svg>
          </div>
        </div>
        <hr>
        <div class="describe"><span>Description:</span><button class="push wide">Options...</button></div>
        <div class="actions">
          <button class="push wide">Cancel</button>
          <button class="push">Step</button>
          <button class="push">Edit</button>
          <button class="push run">Run</button>
        </div>
      </div>
      <div class="mark"></div>
      <svg class="arrow" width="159" height="38" viewBox="0 0 159 38"><path d="M0 15h120V0l39 19-39 19V23H0z" fill="#8aebb3"/></svg>
    `;
  }
}
customElements.define('macro-dialog', MacroDialog);
</script>
</body>
</html>
